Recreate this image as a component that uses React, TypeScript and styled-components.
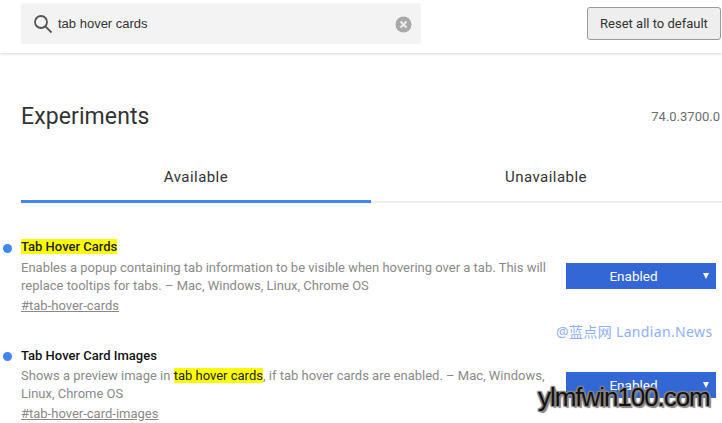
import React from "react";
import styled, { createGlobalStyle } from "styled-components";

const Global = createGlobalStyle`
  html, body { margin: 0; padding: 0; background: #fff; }
  body { font-family: Roboto, "Liberation Sans", sans-serif; width: 722px; height: 423px; overflow: hidden; }
`;
const Page = styled.div`position: relative; width: 722px; height: 423px; overflow: hidden;`;
const Header = styled.header`
  height: 53px; box-sizing: border-box; padding: 3px 1px 0 21px; display: flex; justify-content: space-between;
  align-items: flex-start; box-shadow: 0 1px 3px rgba(0,0,0,.16);
`;
const Search = styled.div`
  width: 400px; height: 41px; box-sizing: border-box; background: #f3f3f3; border-radius: 3px;
  display: flex; align-items: center; padding: 1px 9px 0 12px; color: #333; font-size: 13px;
`;
const SearchText = styled.span`flex: 1; margin-left: 5px; margin-top: -1px; font-family: "Liberation Sans", sans-serif; font-size: 13px; color: #333;`;
const Reset = styled.button`
  width: 134px; height: 33px; margin-top: 4px; box-sizing: border-box; background: #eee; border: 1px solid #9a9a9a;
  border-radius: 3px; font: 13px Roboto, sans-serif; color: #333; padding: 0;
`;
const Main = styled.main`padding: 0 2px 0 21px;`;
const TitleRow = styled.div`display: flex; justify-content: space-between; align-items: center; height: 28px; margin-top: 50px;`;
const Title = styled.h1`margin: 0; font-weight: 400; font-size: 23px; letter-spacing: .1px; color: #333; line-height: 28px;`;
const Version = styled.span`font-size: 13px; color: #6e6e6e; margin-top: -1px;`;
const Tabs = styled.div`display: flex; margin: 28px -2px 0 0; border-bottom: 2px solid #eee; box-sizing: border-box; height: 44px;`;
const Tab = styled.div<{ $active?: boolean }>`
  width: 350px; box-sizing: border-box; height: 44px; text-align: center; font-size: 15px; color: #333;
  padding-top: 9px; letter-spacing: .45px; border-bottom: 3px solid ${p => (p.$active ? "#4285f4" : "transparent")};
`;
const Experiment = styled.section`position: relative; display: flex; justify-content: space-between; height: 109px;`;
const Content = styled.div`width: 530px;`;
const Dot = styled.i<{ $top: number }>`position: absolute; left: -18px; top: ${p => p.$top}px; width: 9px; height: 9px; border-radius: 50%; background: #4285f4;`;
const Name = styled.h2`margin: 0; font-size: 13px; line-height: 16px; font-weight: 500; color: #111; height: 16px;`;
const Desc = styled.p<{ $gap: number }>`margin: ${p => p.$gap}px 0 0; font-size: 13px; line-height: 17.5px; color: #8a8a8a; white-space: nowrap;`;
const Anchor = styled.a`display: inline-block; margin-top: 3px; font-size: 13px; line-height: 17px; color: #8a8a8a; text-decoration: underline;`;
const Mark = styled.mark`background: #ff0; color: #222;`;
const Select = styled.div`
  position: relative; width: 150px; height: 26px; margin: 24px 4px 0 0; background: #3367d6; color: #fff;
  font-size: 13.5px; display: flex; align-items: center; justify-content: center; padding-right: 15px; box-sizing: border-box; line-height: 26px;
`;
const Arrow = styled.i`position: absolute; right: 7px; top: 10px; width: 0; height: 0; border-left: 3.5px solid transparent; border-right: 3.5px solid transparent; border-top: 6px solid #fff;`;
const Rows = styled.div`margin-top: 36px;`;
const Watermark = styled.div`
  position: absolute; left: 556px; top: 321px; font: 14px "Noto Sans", "Noto Sans CJK SC", sans-serif; color: #8fb0f5; white-space: nowrap; letter-spacing: .35px;
`;
const Logo = styled.div`
  position: absolute; left: 538px; top: 382px; font: 26px "Liberation Sans", sans-serif; color: #111; white-space: nowrap;
  letter-spacing: -1.05px; text-shadow: 1px 0 1px #8a8583, -1px 0 1px #8a8583, 0 1px 1px #8a8583, 0 -1px 1px #8a8583, 1px 1px 1px #8a8583, -1px -1px 1px #8a8583, 1px -1px 1px #8a8583, -1px 1px 1px #8a8583, 2px 2px 1px #8a8583;
`;

export default function App() {
  return (
    <Page>
      <Global />
      <Header>
        <Search>
          <svg width="20" height="20" viewBox="0 0 20 20" fill="none" stroke="#555" strokeWidth="1.8">
            <circle cx="8" cy="8" r="6" />
            <path d="M12.4 12.4 L18.5 18.5" />
          </svg>
          <SearchText>tab hover cards</SearchText>
          <svg width="17" height="17" viewBox="0 0 17 17">
            <circle cx="8.5" cy="8.5" r="8" fill="#a9a9a9" />
            <path d="M5.5 5.5 L11.5 11.5 M11.5 5.5 L5.5 11.5" stroke="#eee" strokeWidth="2" />
          </svg>
        </Search>
        <Reset>Reset all to default</Reset>
      </Header>
      <Main>
        <TitleRow>
          <Title>Experiments</Title>
          <Version>74.0.3700.0</Version>
        </TitleRow>
        <Tabs>
          <Tab $active>Available</Tab>
          <Tab>Unavailable</Tab>
        </Tabs>
        <Rows>
          <Experiment>
            <Content>
              <Dot $top={5} />
              <Name><Mark>Tab Hover Cards</Mark></Name>
              <Desc $gap={4}>
                Enables a popup containing tab information to be visible when hovering over a tab. This will<br />
                replace tooltips for tabs. – Mac, Windows, Linux, Chrome OS
              </Desc>
              <Anchor>#tab-hover-cards</Anchor>
            </Content>
            <Select>Enabled<Arrow /></Select>
          </Experiment>
          <Experiment>
            <Content>
              <Dot $top={4} />
              <Name>Tab Hover Card Images</Name>
              <Desc $gap={3}>
                Shows a preview image in <Mark>tab hover cards</Mark>, if tab hover cards are enabled. – Mac, Windows,<br />
                Linux, Chrome OS
              </Desc>
              <Anchor>#tab-hover-card-images</Anchor>
            </Content>
            <Select>Enabled<Arrow /></Select>
          </Experiment>
        </Rows>
      </Main>
      <Watermark>@蓝点网 Landian.News</Watermark>
      <Logo>ylmfwin100.com</Logo>
    </Page>
  );
}
